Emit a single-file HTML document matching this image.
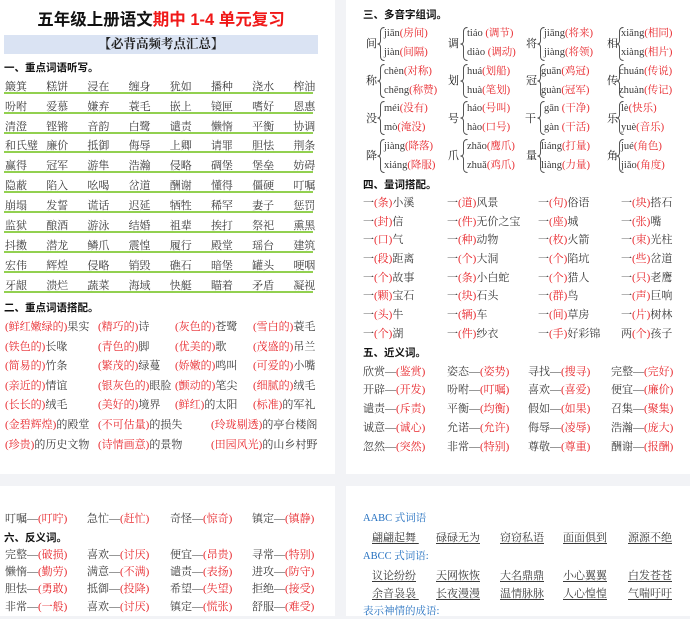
<!DOCTYPE html>
<html><head><meta charset="utf-8">
<style>
*{margin:0;padding:0;box-sizing:border-box}
body{width:690px;height:612px;background:#f2f3f6;position:relative;overflow:hidden;font-family:"Liberation Serif","Noto Serif CJK SC",serif;color:#3a3a3a}
.card{position:absolute;background:#fff}
.t{position:absolute;white-space:nowrap;font-size:11px;line-height:14px;color:#3a3a3a}
.r{color:#e8262b}
.h{position:absolute;white-space:nowrap;font-family:"Liberation Sans","Noto Sans CJK SC",sans-serif;font-weight:bold;font-size:10.5px;line-height:14px;color:#111}
.row{position:absolute;left:5px;white-space:nowrap;font-size:11px;line-height:14px;color:#3a3a3a}
.row span{display:inline-block;width:41.2px}
.ul{position:absolute;left:4px;width:309px;height:1.5px;background:#92d050}
.pc{position:absolute;font-size:11px;line-height:14px;color:#222}
.br{position:absolute;width:8px;height:34px}
.py{position:absolute;font-size:10.5px;line-height:14px;white-space:nowrap;color:#3a3a3a}
.bl{position:absolute;font-size:10.5px;line-height:14px;color:#2470c0;white-space:nowrap}
.uw{position:absolute;font-size:11px;line-height:14px;white-space:nowrap;color:#3a3a3a;text-decoration:underline;text-underline-offset:2px}
</style></head><body>
<div class="card" style="left:0;top:0;width:335px;height:474px"></div>
<div class="card" style="left:346px;top:0;width:344px;height:474px"></div>
<div class="card" style="left:0;top:486px;width:335px;height:130px"></div>
<div class="card" style="left:346px;top:486px;width:344px;height:130px"></div>

<div style="position:absolute;left:0;width:322px;top:8px;text-align:center;font-family:'Liberation Sans','Noto Sans CJK SC',sans-serif;font-weight:bold;font-size:16.5px;line-height:24px;color:#111">五年级上册语文<span style="color:#f01818">期中 1-4 单元复习</span></div>
<div style="position:absolute;left:4px;top:35px;width:314px;height:19px;background:#dae3f3;text-align:center;font-family:'Liberation Serif','Noto Serif CJK SC',serif;font-weight:bold;font-size:12.5px;line-height:19px;color:#222">【必背高频考点汇总】</div>
<div class="h" style="left:4px;top:61px">一、重点词语听写。</div>

<div class="row" style="top:80px"><span>簸箕</span><span>糕饼</span><span>浸在</span><span>缠身</span><span>犹如</span><span>播种</span><span>浇水</span><span>榨油</span></div>
<div class="ul" style="top:92px"></div>
<div class="row" style="top:100px"><span>吩咐</span><span>爱慕</span><span>嫌弃</span><span>蓑毛</span><span>嵌上</span><span>镜匣</span><span>嗜好</span><span>恩惠</span></div>
<div class="ul" style="top:112px"></div>
<div class="row" style="top:120px"><span>清澄</span><span>铿锵</span><span>音韵</span><span>白鹭</span><span>谴责</span><span>懒惰</span><span>平衡</span><span>协调</span></div>
<div class="ul" style="top:132px"></div>
<div class="row" style="top:139px"><span>和氏璧</span><span>廉价</span><span>抵御</span><span>侮辱</span><span>上卿</span><span>请罪</span><span>胆怯</span><span>荆条</span></div>
<div class="ul" style="top:151px"></div>
<div class="row" style="top:159px"><span>赢得</span><span>冠军</span><span>游隼</span><span>浩瀚</span><span>侵略</span><span>碉堡</span><span>堡垒</span><span>妨碍</span></div>
<div class="ul" style="top:171px"></div>
<div class="row" style="top:179px"><span>隐蔽</span><span>陷入</span><span>吆喝</span><span>岔道</span><span>酬谢</span><span>懂得</span><span>僵硬</span><span>叮嘱</span></div>
<div class="ul" style="top:191px"></div>
<div class="row" style="top:199px"><span>崩塌</span><span>发誓</span><span>谎话</span><span>迟延</span><span>牺牲</span><span>稀罕</span><span>妻子</span><span>惩罚</span></div>
<div class="ul" style="top:211px"></div>
<div class="row" style="top:219px"><span>监狱</span><span>酿酒</span><span>游泳</span><span>结婚</span><span>祖辈</span><span>挨打</span><span>祭祀</span><span>熏黑</span></div>
<div class="ul" style="top:231px"></div>
<div class="row" style="top:239px"><span>抖擞</span><span>潜龙</span><span>鳞爪</span><span>震惶</span><span>履行</span><span>殿堂</span><span>瑶台</span><span>建筑</span></div>
<div class="ul" style="top:251px"></div>
<div class="row" style="top:259px"><span>宏伟</span><span>辉煌</span><span>侵略</span><span>销毁</span><span>礁石</span><span>暗堡</span><span>罐头</span><span>哽咽</span></div>
<div class="ul" style="top:271px"></div>
<div class="row" style="top:279px"><span>牙龈</span><span>溃烂</span><span>蔬菜</span><span>海域</span><span>快艇</span><span>瞄着</span><span>矛盾</span><span>凝视</span></div>
<div class="ul" style="top:291px"></div>

<div class="h" style="left:4px;top:301px">二、重点词语搭配。</div>
<div class="t" style="left:5px;top:320px"><span class="r">(鲜红嫩绿的)</span>果实</div>
<div class="t" style="left:98px;top:320px"><span class="r">(精巧的)</span>诗</div>
<div class="t" style="left:175px;top:320px"><span class="r">(灰色的)</span>苍鹭</div>
<div class="t" style="left:253px;top:320px"><span class="r">(雪白的)</span>蓑毛</div>
<div class="t" style="left:5px;top:340px"><span class="r">(铁色的)</span>长喙</div>
<div class="t" style="left:98px;top:340px"><span class="r">(青色的)</span>脚</div>
<div class="t" style="left:175px;top:340px"><span class="r">(优美的)</span>歌</div>
<div class="t" style="left:253px;top:340px"><span class="r">(茂盛的)</span>吊兰</div>
<div class="t" style="left:5px;top:359px"><span class="r">(简易的)</span>竹条</div>
<div class="t" style="left:98px;top:359px"><span class="r">(繁茂的)</span>绿蔓</div>
<div class="t" style="left:175px;top:359px"><span class="r">(娇嫩的)</span>鸣叫</div>
<div class="t" style="left:253px;top:359px"><span class="r">(可爱的)</span>小嘴</div>
<div class="t" style="left:5px;top:379px"><span class="r">(亲近的)</span>情谊</div>
<div class="t" style="left:98px;top:379px"><span class="r">(银灰色的)</span>眼脸</div>
<div class="t" style="left:175px;top:379px"><span class="r">(颤动的)</span>笔尖</div>
<div class="t" style="left:253px;top:379px"><span class="r">(细腻的)</span>绒毛</div>
<div class="t" style="left:5px;top:398px"><span class="r">(长长的)</span>绒毛</div>
<div class="t" style="left:98px;top:398px"><span class="r">(美好的)</span>境界</div>
<div class="t" style="left:175px;top:398px"><span class="r">(鲜红)</span>的太阳</div>
<div class="t" style="left:253px;top:398px"><span class="r">(标准)</span>的军礼</div>
<div class="t" style="left:5px;top:418px"><span class="r">(金碧辉煌)</span>的殿堂</div>
<div class="t" style="left:98px;top:418px"><span class="r">(不可估量)</span>的损失</div>
<div class="t" style="left:211px;top:418px"><span class="r">(玲珑剔透)</span>的亭台楼阁</div>
<div class="t" style="left:5px;top:438px"><span class="r">(珍贵)</span>的历史文物</div>
<div class="t" style="left:98px;top:438px"><span class="r">(诗情画意)</span>的景物</div>
<div class="t" style="left:211px;top:438px"><span class="r">(田园风光)</span>的山乡村野</div>

<div class="h" style="left:363px;top:8px">三、多音字组词。</div>
<svg width="0" height="0" style="position:absolute"><defs><path id="bp" d="M7.5,0.5 Q3.5,0.5 3.5,5 L3.5,13.5 Q3.5,17 0.5,17 Q3.5,17 3.5,20.5 L3.5,29 Q3.5,33.5 7.5,33.5" fill="none" stroke="#444" stroke-width="0.9"/></defs></svg>

<div class="pc" style="left:366px;top:37px">间</div>
<svg class="br" style="left:377px;top:27px"><use href="#bp"/></svg>
<div class="py" style="left:384px;top:27px">jiān<span class="r">(房间)</span></div>
<div class="py" style="left:384px;top:46px">jiàn<span class="r">(间隔)</span></div>
<div class="pc" style="left:448px;top:37px">调</div>
<svg class="br" style="left:460px;top:27px"><use href="#bp"/></svg>
<div class="py" style="left:467px;top:27px">tiáo <span class="r">(调节)</span></div>
<div class="py" style="left:467px;top:46px">diào <span class="r">(调动)</span></div>
<div class="pc" style="left:526px;top:37px">将</div>
<svg class="br" style="left:537px;top:27px"><use href="#bp"/></svg>
<div class="py" style="left:544px;top:27px">jiāng<span class="r">(将来)</span></div>
<div class="py" style="left:544px;top:46px">jiàng<span class="r">(将领)</span></div>
<div class="pc" style="left:607px;top:37px">相</div>
<svg class="br" style="left:616px;top:27px"><use href="#bp"/></svg>
<div class="py" style="left:621px;top:27px">xiāng<span class="r">(相同)</span></div>
<div class="py" style="left:621px;top:46px">xiàng<span class="r">(相片)</span></div>

<div class="pc" style="left:366px;top:74px">称</div>
<svg class="br" style="left:377px;top:64px"><use href="#bp"/></svg>
<div class="py" style="left:384px;top:65px">chèn<span class="r">(对称)</span></div>
<div class="py" style="left:384px;top:84px">chēng<span class="r">(称赞)</span></div>
<div class="pc" style="left:448px;top:74px">划</div>
<svg class="br" style="left:460px;top:64px"><use href="#bp"/></svg>
<div class="py" style="left:467px;top:65px">huá<span class="r">(划船)</span></div>
<div class="py" style="left:467px;top:84px">huà<span class="r">(笔划)</span></div>
<div class="pc" style="left:526px;top:74px">冠</div>
<svg class="br" style="left:537px;top:64px"><use href="#bp"/></svg>
<div class="py" style="left:541px;top:65px">guān<span class="r">(鸡冠)</span></div>
<div class="py" style="left:541px;top:84px">guàn<span class="r">(冠军)</span></div>
<div class="pc" style="left:607px;top:74px">传</div>
<svg class="br" style="left:616px;top:64px"><use href="#bp"/></svg>
<div class="py" style="left:619px;top:65px">chuán<span class="r">(传说)</span></div>
<div class="py" style="left:619px;top:84px">zhuàn<span class="r">(传记)</span></div>

<div class="pc" style="left:366px;top:112px">没</div>
<svg class="br" style="left:377px;top:101px"><use href="#bp"/></svg>
<div class="py" style="left:384px;top:102px">méi<span class="r">(没有)</span></div>
<div class="py" style="left:384px;top:121px">mò<span class="r">(淹没)</span></div>
<div class="pc" style="left:448px;top:112px">号</div>
<svg class="br" style="left:460px;top:101px"><use href="#bp"/></svg>
<div class="py" style="left:467px;top:102px">háo<span class="r">(号叫)</span></div>
<div class="py" style="left:467px;top:121px">hào<span class="r">(口号)</span></div>
<div class="pc" style="left:525px;top:112px">干</div>
<svg class="br" style="left:537px;top:101px"><use href="#bp"/></svg>
<div class="py" style="left:544px;top:102px">gān <span class="r">(干净)</span></div>
<div class="py" style="left:544px;top:121px">gàn <span class="r">(干活)</span></div>
<div class="pc" style="left:607px;top:112px">乐</div>
<svg class="br" style="left:616px;top:101px"><use href="#bp"/></svg>
<div class="py" style="left:621px;top:102px">lè<span class="r">(快乐)</span></div>
<div class="py" style="left:621px;top:121px">yuè<span class="r">(音乐)</span></div>

<div class="pc" style="left:366px;top:149px">降</div>
<svg class="br" style="left:377px;top:139px"><use href="#bp"/></svg>
<div class="py" style="left:384px;top:140px">jiàng<span class="r">(降落)</span></div>
<div class="py" style="left:384px;top:159px">xiáng<span class="r">(降服)</span></div>
<div class="pc" style="left:448px;top:149px">爪</div>
<svg class="br" style="left:460px;top:139px"><use href="#bp"/></svg>
<div class="py" style="left:467px;top:140px">zhǎo<span class="r">(鹰爪)</span></div>
<div class="py" style="left:467px;top:159px">zhuǎ<span class="r">(鸡爪)</span></div>
<div class="pc" style="left:526px;top:149px">量</div>
<svg class="br" style="left:537px;top:139px"><use href="#bp"/></svg>
<div class="py" style="left:541px;top:140px">liáng<span class="r">(打量)</span></div>
<div class="py" style="left:541px;top:159px">liàng<span class="r">(力量)</span></div>
<div class="pc" style="left:607px;top:149px">角</div>
<svg class="br" style="left:616px;top:139px"><use href="#bp"/></svg>
<div class="py" style="left:621px;top:140px">jué<span class="r">(角色)</span></div>
<div class="py" style="left:621px;top:159px">jiǎo<span class="r">(角度)</span></div>

<div class="h" style="left:363px;top:178px">四、量词搭配。</div>
<div class="t" style="left:363px;top:196px">一<span class="r">(条)</span>小溪</div>
<div class="t" style="left:447px;top:196px">一<span class="r">(道)</span>风景</div>
<div class="t" style="left:538px;top:196px">一<span class="r">(句)</span>俗语</div>
<div class="t" style="left:621px;top:196px">一<span class="r">(块)</span>搭石</div>
<div class="t" style="left:363px;top:215px">一<span class="r">(封)</span>信</div>
<div class="t" style="left:447px;top:215px">一<span class="r">(件)</span>无价之宝</div>
<div class="t" style="left:538px;top:215px">一<span class="r">(座)</span>城</div>
<div class="t" style="left:621px;top:215px">一<span class="r">(张)</span>嘴</div>
<div class="t" style="left:363px;top:233px">一<span class="r">(口)</span>气</div>
<div class="t" style="left:447px;top:233px">一<span class="r">(种)</span>动物</div>
<div class="t" style="left:538px;top:233px">一<span class="r">(枚)</span>火箭</div>
<div class="t" style="left:621px;top:233px">一<span class="r">(束)</span>光柱</div>
<div class="t" style="left:363px;top:252px">一<span class="r">(段)</span>距离</div>
<div class="t" style="left:447px;top:252px">一<span class="r">(个)</span>大洞</div>
<div class="t" style="left:538px;top:252px">一<span class="r">(个)</span>陷坑</div>
<div class="t" style="left:621px;top:252px">一<span class="r">(些)</span>岔道</div>
<div class="t" style="left:363px;top:271px">一<span class="r">(个)</span>故事</div>
<div class="t" style="left:447px;top:271px">一<span class="r">(条)</span>小白蛇</div>
<div class="t" style="left:538px;top:271px">一<span class="r">(个)</span>猎人</div>
<div class="t" style="left:621px;top:271px">一<span class="r">(只)</span>老鹰</div>
<div class="t" style="left:363px;top:289px">一<span class="r">(颗)</span>宝石</div>
<div class="t" style="left:447px;top:289px">一<span class="r">(块)</span>石头</div>
<div class="t" style="left:538px;top:289px">一<span class="r">(群)</span>鸟</div>
<div class="t" style="left:621px;top:289px">一<span class="r">(声)</span>巨响</div>
<div class="t" style="left:363px;top:308px">一<span class="r">(头)</span>牛</div>
<div class="t" style="left:447px;top:308px">一<span class="r">(辆)</span>车</div>
<div class="t" style="left:538px;top:308px">一<span class="r">(间)</span>草房</div>
<div class="t" style="left:621px;top:308px">一<span class="r">(片)</span>树林</div>
<div class="t" style="left:363px;top:327px">一<span class="r">(个)</span>湖</div>
<div class="t" style="left:447px;top:327px">一<span class="r">(件)</span>纱衣</div>
<div class="t" style="left:538px;top:327px">一<span class="r">(手)</span>好彩锦</div>
<div class="t" style="left:621px;top:327px">两<span class="r">(个)</span>孩子</div>

<div class="h" style="left:363px;top:346px">五、近义词。</div>
<div class="t" style="left:363px;top:365px">欣赏—<span class="r">(鉴赏)</span></div>
<div class="t" style="left:447px;top:365px">姿态—<span class="r">(姿势)</span></div>
<div class="t" style="left:528px;top:365px">寻找—<span class="r">(搜寻)</span></div>
<div class="t" style="left:611px;top:365px">完整—<span class="r">(完好)</span></div>
<div class="t" style="left:363px;top:383px">开辟—<span class="r">(开发)</span></div>
<div class="t" style="left:447px;top:383px">吩咐—<span class="r">(叮嘱)</span></div>
<div class="t" style="left:528px;top:383px">喜欢—<span class="r">(喜爱)</span></div>
<div class="t" style="left:611px;top:383px">便宜—<span class="r">(廉价)</span></div>
<div class="t" style="left:363px;top:402px">谴责—<span class="r">(斥责)</span></div>
<div class="t" style="left:447px;top:402px">平衡—<span class="r">(均衡)</span></div>
<div class="t" style="left:528px;top:402px">假如—<span class="r">(如果)</span></div>
<div class="t" style="left:611px;top:402px">召集—<span class="r">(聚集)</span></div>
<div class="t" style="left:363px;top:421px">诚意—<span class="r">(诚心)</span></div>
<div class="t" style="left:447px;top:421px">允诺—<span class="r">(允许)</span></div>
<div class="t" style="left:528px;top:421px">侮辱—<span class="r">(凌辱)</span></div>
<div class="t" style="left:611px;top:421px">浩瀚—<span class="r">(庞大)</span></div>
<div class="t" style="left:363px;top:440px">忽然—<span class="r">(突然)</span></div>
<div class="t" style="left:447px;top:440px">非常—<span class="r">(特别)</span></div>
<div class="t" style="left:528px;top:440px">尊敬—<span class="r">(尊重)</span></div>
<div class="t" style="left:611px;top:440px">酬谢—<span class="r">(报酬)</span></div>

<div class="t" style="left:5px;top:512px">叮嘱—<span class="r">(叮咛)</span></div>
<div class="t" style="left:87px;top:512px">急忙—<span class="r">(赶忙)</span></div>
<div class="t" style="left:170px;top:512px">奇怪—<span class="r">(惊奇)</span></div>
<div class="t" style="left:252px;top:512px">镇定—<span class="r">(镇静)</span></div>
<div class="h" style="left:4px;top:531px">六、反义词。</div>
<div class="t" style="left:5px;top:548px">完整—<span class="r">(破损)</span></div>
<div class="t" style="left:87px;top:548px">喜欢—<span class="r">(讨厌)</span></div>
<div class="t" style="left:170px;top:548px">便宜—<span class="r">(昂贵)</span></div>
<div class="t" style="left:252px;top:548px">寻常—<span class="r">(特别)</span></div>
<div class="t" style="left:5px;top:565px">懒惰—<span class="r">(勤劳)</span></div>
<div class="t" style="left:87px;top:565px">满意—<span class="r">(不满)</span></div>
<div class="t" style="left:170px;top:565px">谴责—<span class="r">(表扬)</span></div>
<div class="t" style="left:252px;top:565px">进攻—<span class="r">(防守)</span></div>
<div class="t" style="left:5px;top:582px">胆怯—<span class="r">(勇敢)</span></div>
<div class="t" style="left:87px;top:582px">抵御—<span class="r">(投降)</span></div>
<div class="t" style="left:170px;top:582px">希望—<span class="r">(失望)</span></div>
<div class="t" style="left:252px;top:582px">拒绝—<span class="r">(接受)</span></div>
<div class="t" style="left:5px;top:600px">非常—<span class="r">(一般)</span></div>
<div class="t" style="left:87px;top:600px">喜欢—<span class="r">(讨厌)</span></div>
<div class="t" style="left:170px;top:600px">镇定—<span class="r">(慌张)</span></div>
<div class="t" style="left:252px;top:600px">舒服—<span class="r">(难受)</span></div>

<div class="bl" style="left:363px;top:512px">AABC 式词语</div>
<div class="uw" style="left:372px;top:531px">翩翩起舞&nbsp;</div>
<div class="uw" style="left:436px;top:531px">碌碌无为</div>
<div class="uw" style="left:500px;top:531px">窃窃私语</div>
<div class="uw" style="left:563px;top:531px">面面俱到</div>
<div class="uw" style="left:628px;top:531px">源源不绝</div>
<div class="bl" style="left:363px;top:550px">ABCC 式词语:</div>
<div class="uw" style="left:372px;top:569px">议论纷纷</div>
<div class="uw" style="left:436px;top:569px">天网恢恢</div>
<div class="uw" style="left:500px;top:569px">大名鼎鼎</div>
<div class="uw" style="left:563px;top:569px">小心翼翼</div>
<div class="uw" style="left:628px;top:569px">白发苍苍</div>
<div class="uw" style="left:372px;top:587px">余音袅袅&nbsp;</div>
<div class="uw" style="left:436px;top:587px">长夜漫漫</div>
<div class="uw" style="left:500px;top:587px">温情脉脉</div>
<div class="uw" style="left:563px;top:587px">人心惶惶</div>
<div class="uw" style="left:628px;top:587px">气喘吁吁</div>
<div class="bl" style="left:363px;top:605px">表示神情的成语:</div>
</body></html>
